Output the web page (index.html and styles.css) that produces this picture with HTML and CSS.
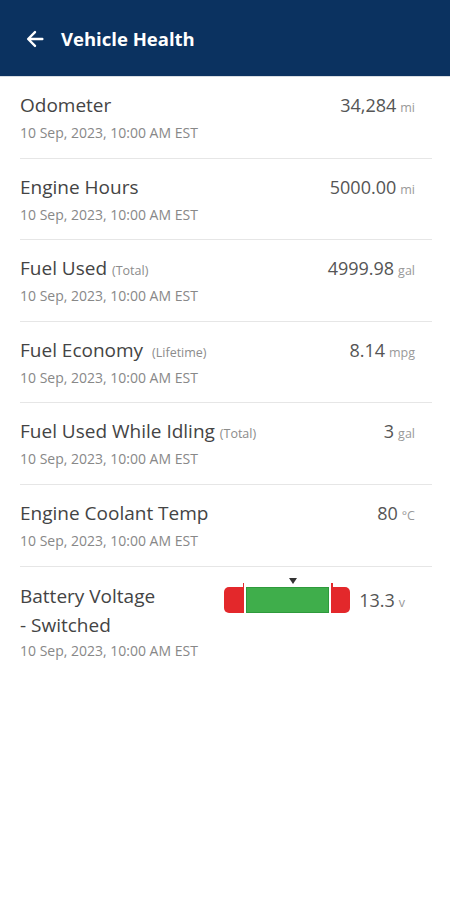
FILE: index.html
```html
<!DOCTYPE html>
<html lang="en">
<head>
    <meta charset="UTF-8">
    <meta name="viewport" content="width=device-width, initial-scale=1.0">
    <title>Vehicle Health</title>
    <link rel="stylesheet" href="styles.css">
</head>
<body>
    <header class="app-bar">
        <svg class="back-icon" width="22" height="22" viewBox="0 0 24 24">
            <path d="M20 12H5M12 4.5L4.5 12l7.5 7.5" fill="none" stroke="#fff" stroke-width="2.6" stroke-linecap="round" stroke-linejoin="round"/>
        </svg>
        <h1>Vehicle Health</h1>
    </header>

    <ul class="health-list">
        <li class="health-row">
            <div class="info">
                <div class="name">Odometer</div>
                <div class="date">10 Sep, 2023, 10:00 AM EST</div>
            </div>
            <div class="value">34,284<span class="unit">mi</span></div>
        </li>
        <li class="health-row">
            <div class="info">
                <div class="name">Engine Hours</div>
                <div class="date">10 Sep, 2023, 10:00 AM EST</div>
            </div>
            <div class="value">5000.00<span class="unit">mi</span></div>
        </li>
        <li class="health-row">
            <div class="info">
                <div class="name">Fuel Used <span class="note">(Total)</span></div>
                <div class="date">10 Sep, 2023, 10:00 AM EST</div>
            </div>
            <div class="value">4999.98<span class="unit">gal</span></div>
        </li>
        <li class="health-row">
            <div class="info">
                <div class="name">Fuel Economy <span class="note wide">(Lifetime)</span></div>
                <div class="date">10 Sep, 2023, 10:00 AM EST</div>
            </div>
            <div class="value">8.14<span class="unit">mpg</span></div>
        </li>
        <li class="health-row">
            <div class="info">
                <div class="name">Fuel Used While Idling <span class="note">(Total)</span></div>
                <div class="date">10 Sep, 2023, 10:00 AM EST</div>
            </div>
            <div class="value">3<span class="unit">gal</span></div>
        </li>
        <li class="health-row">
            <div class="info">
                <div class="name">Engine Coolant Temp</div>
                <div class="date">10 Sep, 2023, 10:00 AM EST</div>
            </div>
            <div class="value">80<span class="unit">°C</span></div>
        </li>
        <li class="health-row battery">
            <div class="info">
                <div class="name">Battery Voltage<br>- Switched</div>
                <div class="date">10 Sep, 2023, 10:00 AM EST</div>
            </div>
            <div class="gauge-wrap">
                <div class="gauge">
                    <span class="pointer"></span>
                    <span class="seg low"></span>
                    <span class="seg ok"></span>
                    <span class="seg high"></span>
                </div>
                <div class="value">13.3<span class="unit">v</span></div>
            </div>
        </li>
    </ul>
</body>
</html>
```

FILE: styles.css
```css
body {
    font-family: "Open Sans", "Noto Sans", sans-serif;
    background-color: #fff;
    margin: 0;
    padding: 0;
}
.app-bar {
    background-color: #0b3260;
    height: 77px;
    display: flex;
    align-items: center;
    padding: 1px 0 0 24px;
    box-sizing: border-box;
    border-bottom: 1px solid #d8dde3;
}
.back-icon {
    margin-right: 15px;
}
.app-bar h1 {
    color: #fff;
    font-size: 18.5px;
    font-weight: 700;
    margin: 0;
}
.health-list {
    list-style: none;
    margin: 0 18px 0 20px;
    padding: 0;
}
.health-row {
    display: flex;
    justify-content: space-between;
    align-items: flex-start;
    padding: 16px 17px 15.6px 0;
    border-bottom: 1px solid #e6e6e6;
}
.health-row:last-child {
    border-bottom: none;
}
.name {
    font-size: 19px;
    line-height: 24px;
    color: #444;
}
.note {
    font-size: 12.5px;
    line-height: 1;
    color: #8c8c8c;
}
.note.wide {
    margin-left: 4px;
}
.date {
    font-size: 14px;
    line-height: 18px;
    color: #888;
    margin-top: 7px;
}
.value {
    font-size: 18px;
    line-height: 24px;
    color: #555;
    white-space: nowrap;
}
.unit {
    font-size: 12.5px;
    line-height: 1;
    color: #999;
    margin-left: 4px;
}
.battery .name {
    line-height: 29px;
}
.battery {
    padding-top: 15px;
}
.battery .date {
    margin-top: 2px;
}
.gauge-wrap {
    display: flex;
    align-items: center;
    margin-top: 5px;
    padding-right: 10px;
}
.gauge {
    position: relative;
    display: flex;
    gap: 2px;
    height: 26px;
    margin-right: 9px;
}
.seg {
    display: block;
    position: relative;
    height: 100%;
    box-sizing: border-box;
}
.seg.low {
    width: 20px;
    background-color: #e3282b;
    border-radius: 5px 0 0 5px;
}
.seg.ok {
    width: 83px;
    background-color: #3fae4b;
    border: 1px solid #2e9a3c;
}
.seg.high {
    width: 19px;
    background-color: #e3282b;
    border-radius: 0 5px 5px 0;
}
.seg.low::after,
.seg.high::after {
    content: "";
    position: absolute;
    top: -4px;
    width: 1.5px;
    height: 6px;
    background-color: #e3282b;
}
.seg.low::after {
    right: 0;
}
.seg.high::after {
    left: 0;
}
.pointer {
    position: absolute;
    top: -9px;
    left: 65px;
    width: 0;
    height: 0;
    border-left: 4.5px solid transparent;
    border-right: 4.5px solid transparent;
    border-top: 6px solid #333;
}
```
